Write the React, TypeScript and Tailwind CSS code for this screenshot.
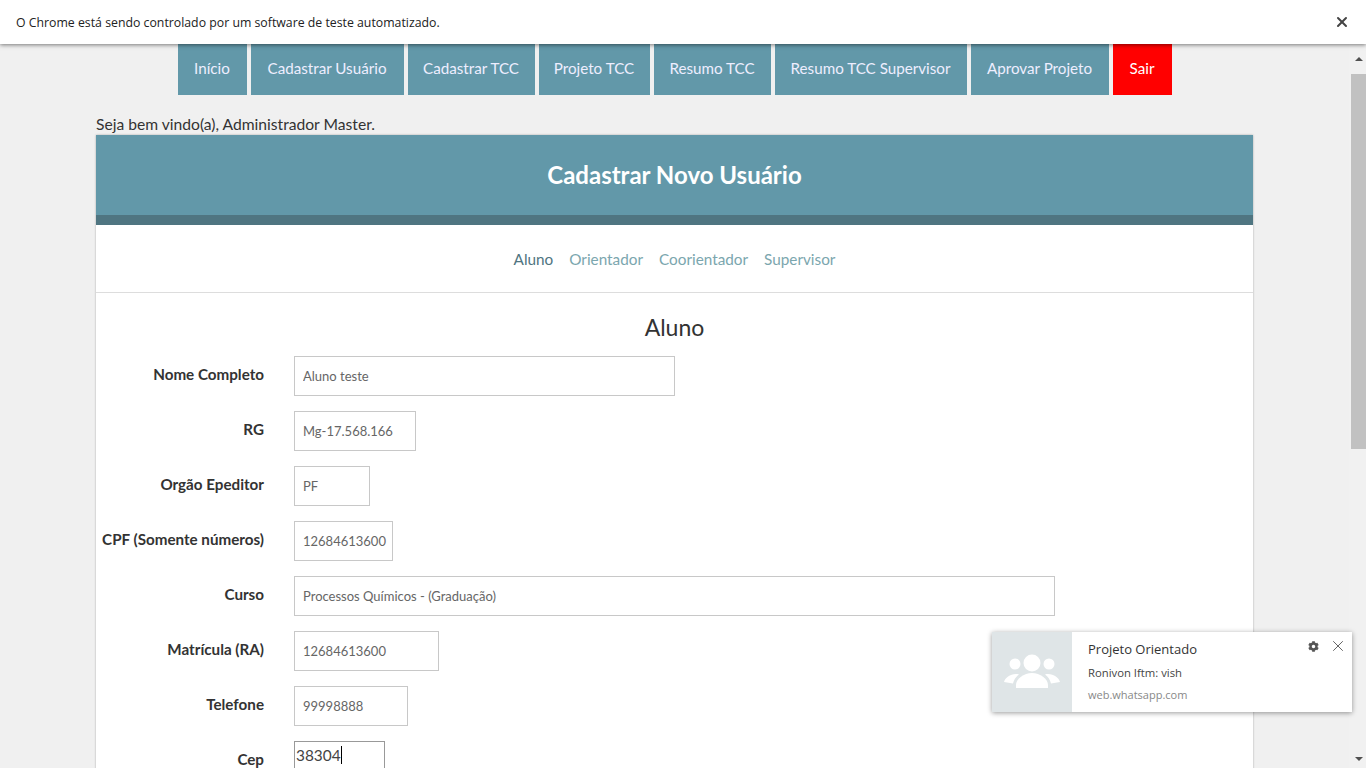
import { FaCog } from 'react-icons/fa';
import { X } from 'lucide-react';

const navItems = [
    { label: 'Início', width: 'w-[69px]' },
    { label: 'Cadastrar Usuário', width: 'w-[153px]' },
    { label: 'Cadastrar TCC', width: 'w-[127px]' },
    { label: 'Projeto TCC', width: 'w-[111px]' },
    { label: 'Resumo TCC', width: 'w-[117px]' },
    { label: 'Resumo TCC Supervisor', width: 'w-[192px]' },
    { label: 'Aprovar Projeto', width: 'w-[138px]' },
];

const tabs = ['Aluno', 'Orientador', 'Coorientador', 'Supervisor'];

const fields = [
    { label: 'Nome Completo', value: 'Aluno teste', width: 'w-[381px]' },
    { label: 'RG', value: 'Mg-17.568.166', width: 'w-[122px]' },
    { label: 'Orgão Epeditor', value: 'PF', width: 'w-[76px]' },
    { label: 'CPF (Somente números)', value: '12684613600', width: 'w-[99px]' },
    { label: 'Curso', value: 'Processos Químicos - (Graduação)', width: 'w-[761px]' },
    { label: 'Matrícula (RA)', value: '12684613600', width: 'w-[145px]' },
    { label: 'Telefone', value: '99998888', width: 'w-[114px]' },
];

const App = () => {
    return (
        <div className="relative h-screen flex flex-col overflow-hidden bg-[#f0f0f0] text-[#333] font-['Lato','Liberation_Sans',sans-serif]">
            {/* Automation infobar */}
            <div className="relative z-10 h-[44px] shrink-0 bg-white flex items-center justify-between pl-4 pr-4 pt-[3px] shadow-[0_1px_4px_rgba(0,0,0,0.5)] font-['Open_Sans',sans-serif]">
                <span className="text-[12.3px] text-[#222]">O Chrome está sendo controlado por um software de teste automatizado.</span>
                <X size={16} strokeWidth={3} className="text-[#444] -mt-[3px]" />
            </div>

            <div className="flex-1 flex min-h-0">
                <div className="flex-1 min-w-0 overflow-hidden">
                    {/* Nav */}
                    <div className="flex justify-center gap-1 h-[51px]">
                        {navItems.map((item) => (
                            <div key={item.label} className={`${item.width} pb-[2px] flex items-center justify-center bg-[#6298a9] text-[#eef] text-[15.2px]`}>
                                {item.label}
                            </div>
                        ))}
                        <div className="w-[59px] pb-[2px] flex items-center justify-center bg-[#ff0000] text-white text-[15.2px]">Sair</div>
                    </div>

                    <div className="w-[1157px] ml-[96px]">
                        <p className="h-[41px] flex items-end text-[15.65px] leading-[24px] -mb-px">Seja bem vindo(a), Administrador Master.</p>

                        <div className="bg-white shadow-[0_0_2px_rgba(0,0,0,0.3)]">
                            <div className="h-[90px] bg-[#6298a9] border-b-[10px] border-[#4f7581] flex items-center justify-center">
                                <h1 className="text-[24px] font-bold text-white">Cadastrar Novo Usuário</h1>
                            </div>

                            <div className="h-[68px] pt-[2px] border-b border-[#ddd] flex items-center justify-center gap-4">
                                {tabs.map((tab, i) => (
                                    <span key={tab} className={i === 0 ? 'text-[15.3px] text-[#4f7581]' : 'text-[15.3px] text-[#7ba6ae]'}>
                                        {tab}
                                    </span>
                                ))}
                            </div>

                            <h2 className="text-center text-[23px] leading-[30px] pt-[19px] text-[#333]">Aluno</h2>

                            <div className="flex flex-col gap-[15px] mt-[14px] pb-10">
                                {fields.map((field) => (
                                    <div key={field.label} className="flex items-center">
                                        <label className="w-[168px] text-right font-bold text-[15.2px] -mt-1 whitespace-nowrap">{field.label}</label>
                                        <input
                                            readOnly
                                            value={field.value}
                                            className={`${field.width} ml-[30px] h-[40px] border border-[#c8c8c8] pl-2 text-[13px] text-[#666] outline-none`}
                                        />
                                    </div>
                                ))}
                                <div className="flex items-center">
                                    <label className="w-[168px] text-right font-bold text-[15.2px] -mt-1 whitespace-nowrap">Cep</label>
                                    <div className="w-[91px] ml-[30px] h-[40px] border border-[#999] pl-px pt-px text-[15.4px] leading-[24px] text-[#444] flex items-start">
                                        38304<span className="w-px h-[18px] mt-[3px] bg-black" />
                                    </div>
                                </div>
                            </div>
                        </div>
                    </div>
                </div>

                {/* Scrollbar */}
                <div className="w-[17px] shrink-0 bg-[#f1f1f1] flex flex-col items-end">
                    <div className="w-[15px] h-[30px] flex items-center justify-center">
                        <div className="w-0 h-0 border-x-[4px] border-x-transparent border-b-[4px] border-b-[#505050]" />
                    </div>
                    <div className="w-[15px] h-[375px] bg-[#c1c1c1]" />
                    <div className="flex-1" />
                    <div className="w-[15px] h-[18px] flex items-center justify-center">
                        <div className="w-0 h-0 border-x-[4px] border-x-transparent border-t-[4px] border-t-[#505050]" />
                    </div>
                </div>
            </div>

            {/* Desktop notification */}
            <div className="absolute z-20 left-[992px] top-[632px] w-[360px] h-[80px] bg-white flex shadow-[0_1px_5px_rgba(0,0,0,0.4)] font-['Open_Sans',sans-serif]">
                <div className="w-[80px] bg-[#dfe5e7]">
                    <svg width="80" height="80" viewBox="0 0 80 80" fill="#fff">
                        <circle cx="40" cy="31" r="8.5" />
                        <circle cx="23" cy="32" r="5.5" />
                        <circle cx="57" cy="32" r="5.5" />
                        <path d="M24 56v-3c0-6 8-12 16-12s16 6 16 12v3z" />
                        <path d="M12 50c1-4 6-8 12-8 1 0 2 0 3 .5-3 2-5 5-6 9z" />
                        <path d="M68 50c-1-4-6-8-12-8-1 0-2 0-3 .5 3 2 5 5 6 9z" />
                    </svg>
                </div>
                <div className="pl-4 pt-[7px] flex-1 flex flex-col">
                    <span className="text-[13px] leading-[20px] text-[#333]">Projeto Orientado</span>
                    <span className="text-[11.3px] leading-[16px] mt-[6px] text-[#444]">Ronivon Iftm: vish</span>
                    <span className="text-[11px] leading-[16px] mt-[6px] text-[#888]">web.whatsapp.com</span>
                </div>
                <div className="absolute right-[5px] top-[5px] flex items-center gap-[10px]">
                    <FaCog size={11} className="text-[#555]" />
                    <X size={18} strokeWidth={1.1} className="text-[#444]" />
                </div>
            </div>
        </div>
    );
};

export default App;
